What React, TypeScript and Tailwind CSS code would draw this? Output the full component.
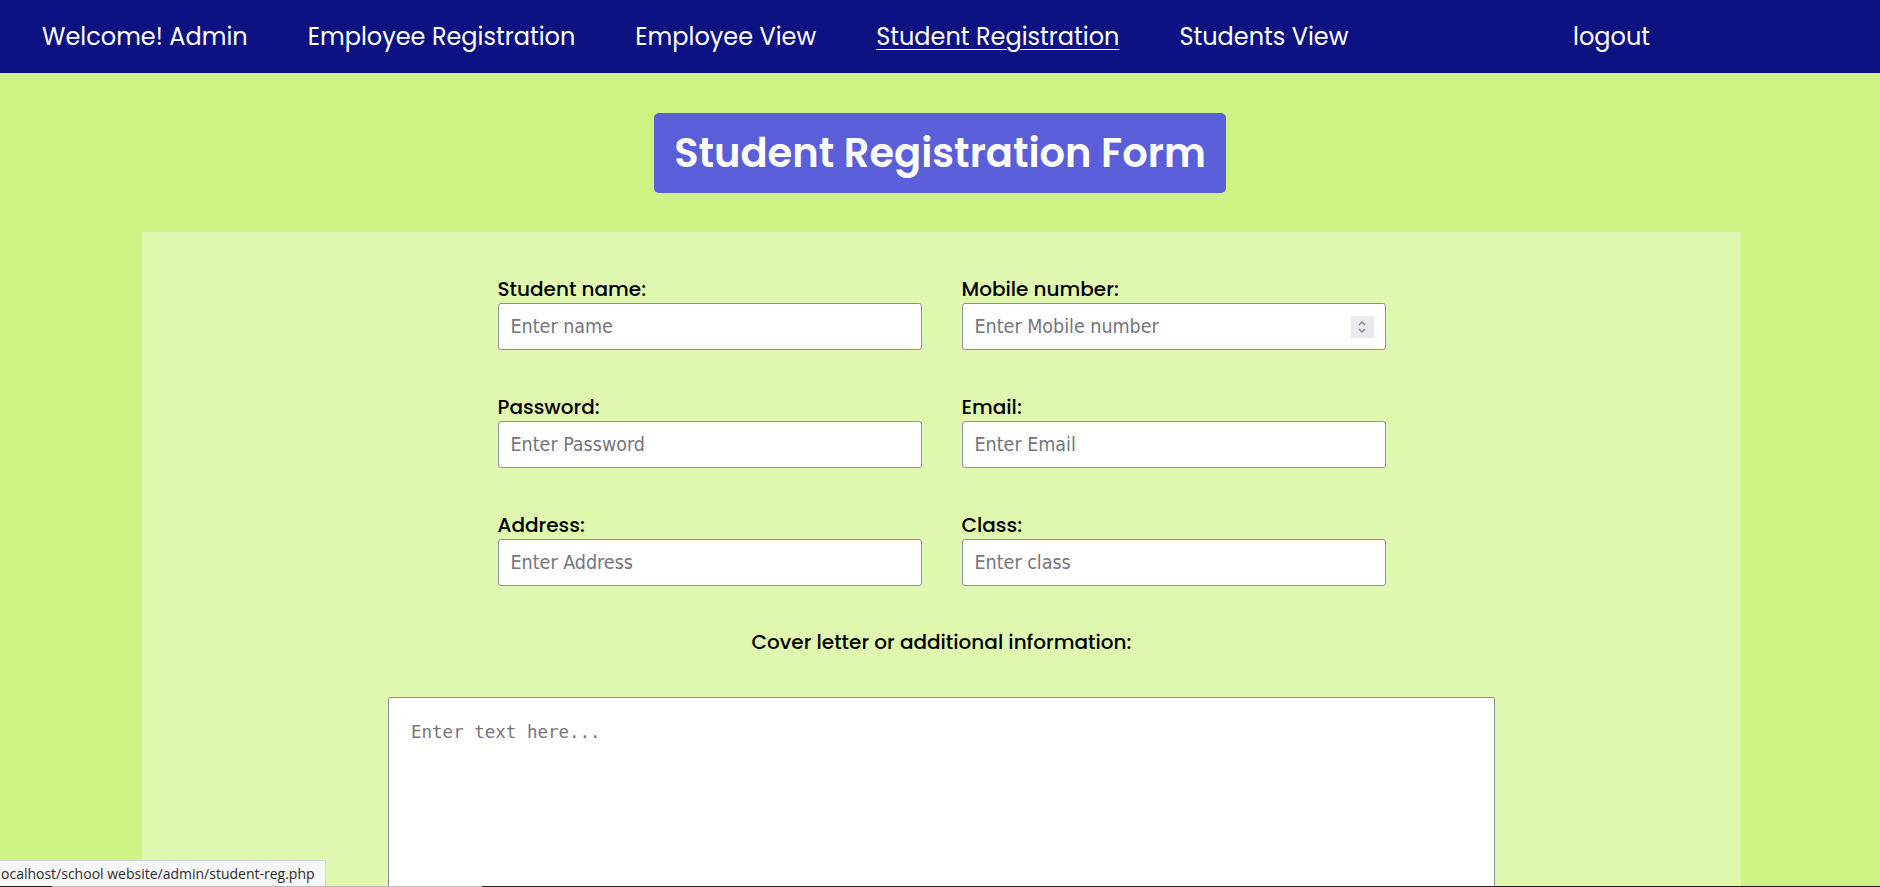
import React from "react";

const poppins = { fontFamily: "Poppins, Inter, 'Open Sans', sans-serif" };

function Field({ label, placeholder, spinner }: { label: string; placeholder: string; spinner?: boolean }) {
  return (
    <div className="flex flex-col">
      <label className="h-[28px] text-[20px] font-medium leading-[28px] text-black" style={poppins}>
        {label}
      </label>
      <div className="relative h-[47px] w-[424px] rounded-[3px] border border-[#8f8f9d] bg-white">
        <div
          className="flex h-full items-center pl-[12px] text-[19.5px] text-[#75757e]"
          style={{ fontFamily: "'DejaVu Sans Condensed', 'DejaVu Sans', sans-serif" }}
        >
          {placeholder}
        </div>
        {spinner && (
          <div className="absolute right-[11px] top-[12px] flex h-[22px] w-[23px] flex-col items-center justify-center bg-[#e9e9ed]">
            <svg width="10" height="16" viewBox="0 0 10 16" fill="none" stroke="#8a8a8e" strokeWidth="1.4">
              <path d="M2 6 L5 3 L8 6" />
              <path d="M2 10 L5 13 L8 10" />
            </svg>
          </div>
        )}
      </div>
    </div>
  );
}

export default function App() {
  return (
    <div className="relative min-h-[887px] bg-[#cdf385]">
      <nav className="flex h-[73px] items-center bg-[#0c1282] pl-[42px] pr-[230px] text-[24px] text-white" style={poppins}>
        <div className="flex gap-[60px]">
          <span>Welcome! Admin</span>
          <span>Employee Registration</span>
          <span>Employee View</span>
          <span className="underline underline-offset-[4px] decoration-1">Student Registration</span>
          <span>Students View</span>
        </div>
        <span className="ml-auto">logout</span>
      </nav>

      <div className="flex justify-center pt-[40px]">
        <h1
          className="flex h-[80px] items-center rounded-[5px] bg-[#5a5fd9] px-[20px] text-[40px] font-semibold text-white"
          style={poppins}
        >
          Student Registration Form
        </h1>
      </div>

      <div className="ml-[142px] mt-[39px] w-[1599px] bg-[#e0f7b0] pb-[80px] pt-[43px]">
        <div className="mx-auto grid w-[888px] grid-cols-2 gap-x-[40px] gap-y-[43px]">
          <Field label="Student name:" placeholder="Enter name" />
          <Field label="Mobile number:" placeholder="Enter Mobile number" spinner />
          <Field label="Password:" placeholder="Enter Password" />
          <Field label="Email:" placeholder="Enter Email" />
          <Field label="Address:" placeholder="Enter Address" />
          <Field label="Class:" placeholder="Enter class" />
        </div>
        <div className="mt-[42px] h-[28px] text-center text-[20px] font-medium leading-[28px] text-black" style={poppins}>
          Cover letter or additional information:
        </div>
        <div className="mx-auto mt-[41px] h-[260px] w-[1107px] rounded-[2px] border border-[#8f8f9d] bg-white pl-[22px] pt-[22px]">
          <span
            className="text-[17.5px] leading-[20px] text-[#75757e]"
            style={{ fontFamily: "'DejaVu Sans Mono', monospace" }}
          >
            Enter text here...
          </span>
        </div>
      </div>

      <div className="fixed bottom-0 left-0 flex h-[1px] w-full">
        <div className="w-[52px] bg-[#222]" />
        <div className="w-[430px] bg-[#bbb]" />
        <div className="flex-1 bg-[#222]" />
      </div>
      <div
        className="fixed bottom-[1px] left-0 flex h-[26px] w-[326px] items-center rounded-tr-[2px] border-r border-t border-[#d4d4d4] bg-[#f7f7f7] pl-[1px] text-[14px] text-[#2b2b2b]"
        style={{ fontFamily: "'Open Sans', sans-serif" }}
      >
        ocalhost/school website/admin/student-reg.php
      </div>
    </div>
  );
}
